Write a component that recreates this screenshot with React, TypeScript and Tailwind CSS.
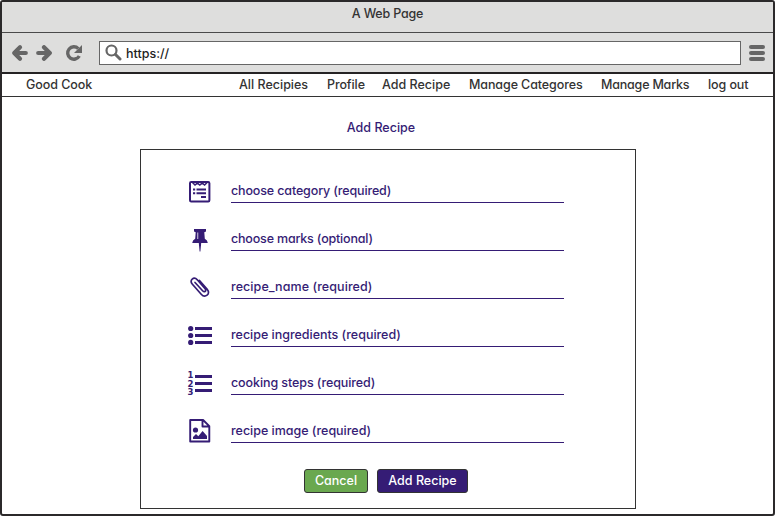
import type { ReactNode } from "react";

const font =
  "font-['Inter','Noto_Sans',sans-serif] [font-feature-settings:'cv11','ss03'] font-medium text-[12.5px] leading-5 whitespace-nowrap";

function Back() {
  return (
    <svg width="17" height="18" viewBox="0 0 17 18" fill="none" stroke="#666" strokeWidth="4.2">
      <path d="M9 3.200 3.200 9 9 14.800M4.500 9h10.300" strokeLinecap="round" strokeLinejoin="round" />
    </svg>
  );
}

function Reload() {
  return (
    <svg width="18" height="18" viewBox="0 0 18 18" fill="none">
      <path d="M13.300 4.600A6.200 6.200 0 1 0 14.300 12" stroke="#666" strokeWidth="3.400" />
      <path d="M17 1v8H9z" fill="#666" />
    </svg>
  );
}

function CategoryIcon() {
  return (
    <>
      <rect x="2" y="5" width="19.400" height="19.400" rx="1.200" fill="none" stroke="#351c75" strokeWidth="2" />
      <path d="M4.500 5.500l2.500 2.600 2.400-2 2.400 2 2.400-2 2.400 2 2.500-2.600" fill="none" stroke="#351c75" strokeWidth="1.500" />
      <path d="M5 12.500h2.200M8.500 12.500H18M5 16.300h2.200M8.500 16.300H18M13 20h5" stroke="#351c75" strokeWidth="2" />
    </>
  );
}

function PinIcon() {
  return (
    <>
      <path d="M6 4h12v2.600l-1.700.7.500 6.400q2.800 1.200 3 4.300h-6.600l-.8 8.500h-.8l-.8-8.500H4.200q.2-3.100 3-4.300l.500-6.400L6 6.600z" fill="#351c75" />
      <path d="M9.700 7.500v6.500" stroke="#b8aed0" strokeWidth="1.200" />
    </>
  );
}

function ClipIcon() {
  return (
    <path
      d="M7 10.500l7.600 8.300c1.900 2 4.300 0 2.500-2.100L9.300 7.800C5.800 4 .900 8.200 4.200 12l9 10.200c3.700 4.200 10 0 6-4.900L11.500 8.500"
      transform="translate(0 -1)"
      fill="none"
      stroke="#351c75"
      strokeWidth="1.700"
      strokeLinecap="round"
    />
  );
}

function ListIcon() {
  return (
    <g fill="#351c75">
      <circle cx="2.700" cy="7.500" r="2.600" />
      <circle cx="2.700" cy="14.500" r="2.600" />
      <circle cx="2.700" cy="21.400" r="2.600" />
      <rect x="7" y="6" width="17" height="3" />
      <rect x="7" y="13" width="17" height="3" />
      <rect x="7" y="20" width="17" height="3" />
    </g>
  );
}

function NumberedIcon() {
  return (
    <g fill="#351c75">
      <g fontFamily="DejaVu Sans" fontWeight="700" fontSize="8.5">
        <text x="-.4" y="9">1</text>
        <text x="-.4" y="17.500">2</text>
        <text x="-.4" y="26">3</text>
      </g>
      <rect x="7" y="6" width="17" height="3" />
      <rect x="7" y="13" width="17" height="3" />
      <rect x="7" y="20" width="17" height="3" />
    </g>
  );
}

function ImageIcon() {
  return (
    <>
      <path d="M2.200 3h12.900l6.200 6.200v15.300h-19.100zM14.500 3v6.500H21" fill="none" stroke="#351c75" strokeWidth="1.900" strokeLinejoin="round" />
      <circle cx="7.500" cy="13" r="2.600" fill="#351c75" />
      <path d="M5 22v-2l3-3 2.300 2.200 4.300-5.200 4.400 5v3z" fill="#351c75" />
    </>
  );
}

const nav = [
  { label: "All Recipies", cls: "w-[70px] ml-[147px]" },
  { label: "Profile", cls: "w-[37px] ml-[18px] tracking-[-0.1px]" },
  { label: "Add Recipe", cls: "w-[69px] ml-[18px]" },
  { label: "Manage Categores", cls: "w-[114px] ml-[18px] tracking-[-0.1px]" },
  { label: "Manage Marks", cls: "w-[89px] ml-[18px] tracking-[-0.2px]" },
  { label: "log out", cls: "w-[41px] ml-[18px] tracking-[-0.1px]" },
];

const fields: { label: string; icon: ReactNode; cls: string }[] = [
  { label: "choose category (required)", icon: <CategoryIcon />, cls: "tracking-[-0.14px]" },
  { label: "choose marks (optional)", icon: <PinIcon />, cls: "tracking-[-0.18px]" },
  { label: "recipe_name (required)", icon: <ClipIcon />, cls: "tracking-[0.07px]" },
  { label: "recipe ingredients (required)", icon: <ListIcon />, cls: "tracking-[-0.02px]" },
  { label: "cooking steps (required)", icon: <NumberedIcon />, cls: "tracking-[-0.09px]" },
  { label: "recipe image (required)", icon: <ImageIcon />, cls: "tracking-[-0.02px]" },
];

export default function App() {
  return (
    <div className={`flex h-[516px] w-[775px] flex-col overflow-hidden rounded-[3px] border-2 border-[#2b292a] bg-white ${font}`}>
      <header className="h-[31px] shrink-0 border-b border-[#4a4a4a] bg-[#dededd] pt-[2px] text-center tracking-[-0.2px] text-[#333]">
        A Web Page
      </header>
      <div className="flex h-[41px] shrink-0 items-center border-b-2 border-[#252324] bg-[#dededd] pl-[9px]">
        <Back />
        <span className="ml-2 flex rotate-180"><Back /></span>
        <span className="ml-3 flex"><Reload /></span>
        <div className="ml-4 flex h-6 w-[642px] items-center border border-[#666] bg-white pl-[5px] text-[#222]">
          <svg width="17" height="17" viewBox="0 0 17 17" fill="none" stroke="#666">
            <circle cx="6.500" cy="6.500" r="5" strokeWidth="2.200" />
            <path d="M10.500 10.500l4.500 4.500" strokeWidth="3" strokeLinecap="round" />
          </svg>
          <span className="ml-1 pt-[3px]">https://</span>
        </div>
        <div className="ml-2 flex flex-col gap-0.5">
          <i className="h-1 w-4 rounded-full bg-[#666]" />
          <i className="h-1 w-4 rounded-full bg-[#666]" />
          <i className="h-1 w-4 rounded-full bg-[#666]" />
        </div>
      </div>
      <nav className="flex h-[23px] shrink-0 border-b border-[#333] pl-6 pt-[1px] text-[#333]">
        <span className="w-[66px] tracking-[-0.05px]">Good Cook</span>
        {nav.map((n) => (
          <span key={n.label} className={`shrink-0 ${n.cls}`}>{n.label}</span>
        ))}
      </nav>
      <main className="flex flex-col text-[#351c75]">
        <h1 className="mt-[21px] pr-[13px] text-center">Add Recipe</h1>
        <section className="ml-[138px] mt-[11px] h-[360px] w-[496px] border border-[#333] pl-[47px] pt-[5px]">
          {fields.map((f) => (
            <div key={f.label} className="flex h-12 items-end">
              <svg width="24" height="26" viewBox="0 0 24 26" className="shrink-0 overflow-visible">{f.icon}</svg>
              <div className={`ml-[19px] h-[22px] w-[333px] border-b border-[#351c75] ${f.cls}`}>{f.label}</div>
            </div>
          ))}
          <div className="ml-[116px] mt-[26px] flex gap-[9px] text-white">
            <button className="h-6 w-16 rounded-[3px] border border-[#333] bg-[#6aa84f] leading-[22px]">Cancel</button>
            <button className="h-6 w-[91px] rounded-[3px] border border-[#333] bg-[#351c75] leading-[22px]">Add Recipe</button>
          </div>
        </section>
      </main>
    </div>
  );
}
